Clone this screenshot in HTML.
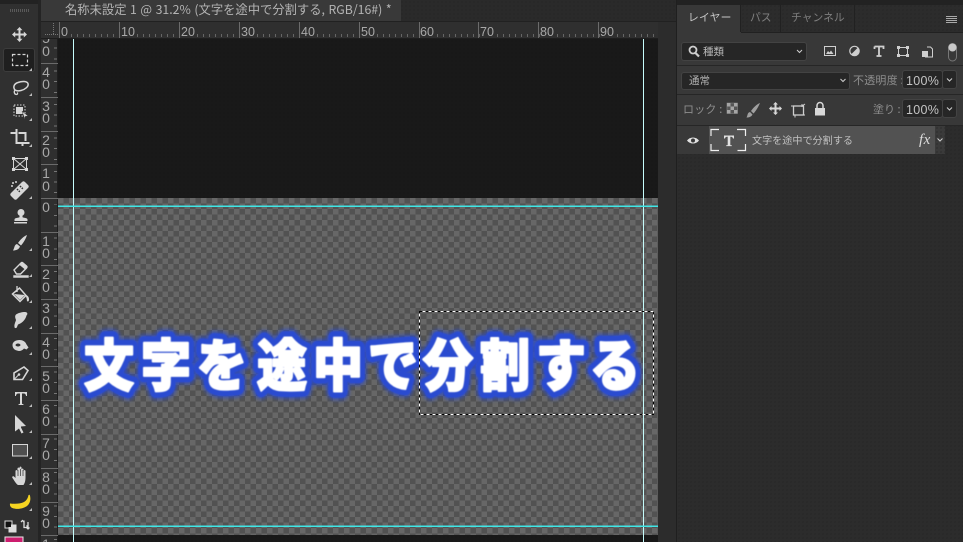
<!DOCTYPE html>
<html lang="ja"><head><meta charset="utf-8"><title>Photoshop</title>
<style>
html,body{margin:0;padding:0;background:#2c2c2c;width:963px;height:542px;overflow:hidden}
body{font-family:"Liberation Sans","Noto Sans CJK JP",sans-serif}
#root{position:absolute;left:0;top:0;width:963px;height:542px;overflow:hidden}
div,span{position:absolute;box-sizing:border-box;white-space:nowrap}
.dots{background-color:#2b2b2b;background-image:radial-gradient(#232323 .7px,transparent .8px);background-size:4px 4px}
.hr{color:#a8a8a8;font-size:12.5px;line-height:12px;top:26px}
.maj{background:#6b6b6b;width:1px;top:22px;height:16px}
.vm{background:#6b6b6b;left:41px;width:17px;height:1px}
.vl{color:#a8a8a8;font-size:14px;line-height:12px;left:41px;width:10px;text-align:center}
.jp{font-family:"Noto Sans CJK JP","Liberation Sans",sans-serif}
.box{background:#262626;border:1px solid #434343;border-radius:3px}
.lab{color:#8e8e8e;font-size:11px;line-height:14px}
.val{color:#c4c4c4;font-size:12.5px;line-height:18px;letter-spacing:.3px}
.ln{background:#262626;height:1px;left:677px;right:0}
</style></head><body><div id="root">

<!-- top strip -->
<div class="dots" style="left:0;top:0;width:963px;height:22px;background-color:#2a2a2a"></div>
<!-- tool panel -->
<div style="left:0;top:0;width:38px;height:542px;background:#303030"></div>
<div style="left:0;top:0;width:38px;height:4px;background:#222"></div>
<div style="left:38px;top:0;width:3px;height:542px;background:#242424"></div>
<div style="left:10px;top:9px;width:19px;height:3px;background:repeating-linear-gradient(90deg,#5a5a5a 0 1px,transparent 1px 2px)"></div>
<div style="left:3px;top:48px;width:32px;height:24px;background:#1f1f1f;border:1px solid #3c3c3c;border-radius:3px"></div>

<!-- tab -->
<div style="left:41px;top:0;width:360px;height:22px;background:#393939"></div>
<div style="left:41px;top:21px;width:636px;height:1px;background:#212121"></div>
<div class="jp" style="left:65px;top:-1px;color:#b4b4b4;font-size:12.3px;line-height:20px;word-spacing:.8px">名称未設定 1 @ 31.2% (文字を途中で分割する, RGB/16#) *</div>

<!-- vertical ruler -->
<div style="left:41px;top:39px;width:17px;height:503px;background:#2f2f2f;border-right:1px solid #1e1e1e"></div>
<div style="left:54px;top:31px;width:3px;height:511px;background:repeating-linear-gradient(180deg,transparent 0 6px,#777 6px 7px,transparent 7px 16.7px,#777 16.7px 17.7px,transparent 17.7px 27.400px,#777 27.400px 28.400px,transparent 28.400px 33.450px)"></div>
<div class="vm" style="top:63px"></div><div class="vm" style="top:97px"></div><div class="vm" style="top:131px"></div><div class="vm" style="top:164px"></div><div class="vm" style="top:198px"></div><div class="vm" style="top:232px"></div><div class="vm" style="top:265px"></div><div class="vm" style="top:299px"></div><div class="vm" style="top:333px"></div><div class="vm" style="top:366px"></div><div class="vm" style="top:400px"></div><div class="vm" style="top:434px"></div><div class="vm" style="top:468px"></div><div class="vm" style="top:502px"></div><div class="vm" style="top:535px"></div>
<span class="vl" style="top:32px">5</span><span class="vl" style="top:45px">0</span>
<span class="vl" style="top:66px">4</span><span class="vl" style="top:78px">0</span>
<span class="vl" style="top:100px">3</span><span class="vl" style="top:112px">0</span>
<span class="vl" style="top:134px">2</span><span class="vl" style="top:146px">0</span>
<span class="vl" style="top:167px">1</span><span class="vl" style="top:180px">0</span>
<span class="vl" style="top:201px">0</span>
<span class="vl" style="top:235px">1</span><span class="vl" style="top:247px">0</span>
<span class="vl" style="top:268px">2</span><span class="vl" style="top:281px">0</span>
<span class="vl" style="top:302px">3</span><span class="vl" style="top:315px">0</span>
<span class="vl" style="top:336px">4</span><span class="vl" style="top:348px">0</span>
<span class="vl" style="top:370px">5</span><span class="vl" style="top:382px">0</span>
<span class="vl" style="top:403px">6</span><span class="vl" style="top:415px">0</span>
<span class="vl" style="top:437px">7</span><span class="vl" style="top:449px">0</span>
<span class="vl" style="top:471px">8</span><span class="vl" style="top:483px">0</span>
<span class="vl" style="top:505px">9</span><span class="vl" style="top:517px">0</span>
<span class="vl" style="top:538px">1</span>

<!-- top ruler -->
<div style="left:41px;top:22px;width:617px;height:17px;background:#2f2f2f;border-bottom:1px solid #1e1e1e"></div>
<div style="left:59px;top:34px;width:599px;height:3px;background:repeating-linear-gradient(90deg,#666 0 1px,transparent 1px 6px)"></div>
<div style="left:45px;top:34px;width:14px;height:1px;background:repeating-linear-gradient(90deg,#777 0 1px,transparent 1px 2px)"></div>
<div style="left:53px;top:23px;width:1px;height:11px;background:repeating-linear-gradient(0deg,#777 0 1px,transparent 1px 2px)"></div>
<div class="maj" style="left:59px"></div><div class="maj" style="left:119px"></div><div class="maj" style="left:179px"></div><div class="maj" style="left:239px"></div><div class="maj" style="left:299px"></div><div class="maj" style="left:359px"></div><div class="maj" style="left:419px"></div><div class="maj" style="left:478px"></div><div class="maj" style="left:538px"></div><div class="maj" style="left:598px"></div><div class="maj" style="left:658px"></div>
<span class="hr" style="left:61px;background:#2f2f2f">0</span><span class="hr" style="left:121px;background:#2f2f2f">10</span><span class="hr" style="left:181px;background:#2f2f2f">20</span><span class="hr" style="left:241px;background:#2f2f2f">30</span><span class="hr" style="left:301px;background:#2f2f2f">40</span><span class="hr" style="left:361px;background:#2f2f2f">50</span><span class="hr" style="left:420px;background:#2f2f2f">60</span><span class="hr" style="left:480px;background:#2f2f2f">70</span><span class="hr" style="left:540px;background:#2f2f2f">80</span><span class="hr" style="left:600px;background:#2f2f2f">90</span>

<!-- canvas -->
<div style="left:58px;top:39px;width:600px;height:503px;background:#191919;background-image:radial-gradient(#141414 .7px,transparent .8px);background-size:4px 4px"></div>
<div style="left:58px;top:198px;width:600px;height:337px;background-color:#676767;background-image:conic-gradient(#525252 25%,#676767 0 50%,#525252 0 75%,#676767 0);background-size:11px 11px;background-position:0 0"></div>

<!-- right gutter -->
<div style="left:658px;top:22px;width:18px;height:520px;background:#2c2c2c"></div>
<div style="left:676px;top:0;width:1px;height:542px;background:#1f1f1f"></div>

<!-- panel -->
<div class="dots" style="left:677px;top:0;width:286px;height:542px;background-color:#2c2c2c"></div>
<div style="left:677px;top:0;width:286px;height:5px;background:#222"></div>
<div style="left:677px;top:32px;width:286px;height:93px;background:#383838"></div>
<div style="left:677px;top:5px;width:63px;height:28px;background:#383838"></div>
<div style="left:740px;top:5px;width:1px;height:27px;background:#212121"></div>
<div style="left:780px;top:5px;width:1px;height:27px;background:#212121"></div>
<div style="left:854px;top:5px;width:1px;height:27px;background:#212121"></div>
<div style="left:741px;top:32px;width:222px;height:1px;background:#212121"></div>
<div class="jp" style="left:688px;top:9px;color:#c6c6c6;font-size:10.8px;line-height:16px;letter-spacing:.2px">レイヤー</div>
<div class="jp" style="left:750px;top:9px;color:#7f7f7f;font-size:10.8px;line-height:16px">パス</div>
<div class="jp" style="left:791px;top:9px;color:#7f7f7f;font-size:10.8px;line-height:16px">チャンネル</div>
<div style="left:946px;top:16px;width:11px;height:7px;background:repeating-linear-gradient(180deg,#aaa 0 1px,transparent 1px 2px)"></div>

<div class="box" style="left:681px;top:42px;width:126px;height:19px"></div>
<div class="jp" style="left:703px;top:44px;color:#b8b8b8;font-size:10.5px;line-height:15px">種類</div>
<div class="ln" style="top:65px"></div>
<div class="box" style="left:681px;top:72px;width:169px;height:18px"></div>
<div class="jp" style="left:689px;top:73px;color:#b0b0b0;font-size:10.5px;line-height:15px">通常</div>
<div class="jp lab" style="left:853px;top:73px;letter-spacing:.2px">不透明度 :</div>
<div class="box" style="left:902px;top:70px;width:41px;height:19px"></div>
<div class="box" style="left:942px;top:70px;width:15px;height:19px"></div>
<div class="val" style="left:906px;top:72px">100%</div>
<div class="ln" style="top:94px"></div>
<div class="jp lab" style="left:683px;top:102px;letter-spacing:.2px">ロック :</div>
<div class="jp lab" style="left:873px;top:102px">塗り :</div>
<div class="box" style="left:902px;top:99px;width:41px;height:19px"></div>
<div class="box" style="left:942px;top:99px;width:15px;height:19px"></div>
<div class="val" style="left:906px;top:101px">100%</div>
<div class="ln" style="top:125px"></div>

<!-- layer row -->
<div style="left:677px;top:126px;width:268px;height:28px;background:#393939"></div>
<div style="left:709px;top:126px;width:226px;height:28px;background:#525252"></div>
<div class="dots" style="left:935px;top:126px;width:10px;height:28px;background-color:#3a3a3a"></div>
<div class="jp" style="left:752px;top:133px;color:#c0c0c0;font-size:10.1px;line-height:14px">文字を途中で分割する</div>
<div style="left:919px;top:132px;color:#dcdcdc;font:italic 400 15px/16px 'Liberation Serif',serif;letter-spacing:.5px">fx</div>

<!-- canvas text + icons overlay -->
<svg width="963" height="542" viewBox="0 0 963 542" style="position:absolute;left:0;top:0">
<defs><filter id="b" x="-5%" y="-20%" width="110%" height="140%"><feGaussianBlur stdDeviation="1.800"/></filter><filter id="s" x="-5%" y="-20%" width="110%" height="140%"><feGaussianBlur stdDeviation=".4"/></filter></defs>
<g font-family="'Noto Sans CJK JP','Liberation Sans',sans-serif" font-weight="900" font-size="50" transform="translate(0,386) scale(1,1.12)" stroke-linejoin="round">
<text filter="url(#b)" x="84 141 197 257 313 368 423 480 536 590" y="0" fill="#2a4bd0" stroke="#2a4bd0" stroke-width="15" opacity=".75">文字を途中で分割する</text>
<text filter="url(#s)" x="84 141 197 257 313 368 423 480 536 590" y="0" fill="#2a4bd0" stroke="#2a4bd0" stroke-width="11.500">文字を途中で分割する</text>
<text filter="url(#s)" x="84 141 197 257 313 368 423 480 536 590" y="0" fill="#fff" stroke="#fff" stroke-width="2">文字を途中で分割する</text>
</g>

<!-- guides -->
<rect x="73" y="39" width="1" height="503" fill="#c4fbfb"/><rect x="643" y="39" width="1" height="503" fill="#c4fbfb"/>
<rect x="58" y="205.500" width="600" height="1.500" fill="#3fe6e6"/><rect x="58" y="525.500" width="600" height="1.500" fill="#3fe6e6"/>

<!-- selection -->
<rect x="419.500" y="311.500" width="234" height="103" fill="none" stroke="#fff"/>
<rect x="419.500" y="311.500" width="234" height="103" fill="none" stroke="#000" stroke-dasharray="3 3"/>

<!-- tools -->
<g fill="#d6d6d6" stroke="none">
<path d="M19.500 27l3 3.200h-2v3.300h3.300v-2l3.200 3-3.200 3v-2h-3.300v3.300h2l-3 3.200-3-3.200h2v-3.300h-3.300v2l-3.200-3 3.200-3v2h3.300v-3.300h-2z"/>
<rect x="12.500" y="54.500" width="15" height="11" fill="none" stroke="#d6d6d6" stroke-width="1.200" stroke-dasharray="3 2"/>
<path d="M15 90c-2-2.500-1.500-6 3-7.500 4-1.500 9-1.500 10 1 1 3-3 6-7 7-2.500.6-4.500.6-6-.5z" fill="none" stroke="#d6d6d6" stroke-width="1.500"/><path d="M15 90c-1.500 2-.5 4.500 1.500 4.500 1 0 1.500-1 .8-2" fill="none" stroke="#d6d6d6" stroke-width="1.300"/>
<rect x="14" y="105" width="11" height="11" fill="none" stroke="#d6d6d6" stroke-dasharray="1.500 1.500"/><rect x="16" y="107" width="7" height="7"/><path d="M22 111l6 5-3 .6 0 3.400z" stroke="#303030" stroke-width=".5"/>
<path d="M10 132h5v-3h2v13h9v2h-11v-10h-5zM18 132h8v9h-2v-7h-6zM26 142h3v2h-3zM21 144h2v2h-2z" transform="translate(.5 0)"/>
<rect x="13.500" y="158.500" width="13" height="11" fill="none" stroke="#d6d6d6"/><path d="M13.500 158.500l13 11M26.500 158.500l-13 11" stroke="#d6d6d6" fill="none"/><rect x="12" y="157" width="3" height="3"/><rect x="25" y="157" width="3" height="3"/><rect x="12" y="168" width="3" height="3"/><rect x="25" y="168" width="3" height="3"/>
<path d="M11 193l11-11c1-1 2-1 3 0l3 3c1 1 1 2 0 3l-11 11c-1 1-2 1-3 0l-3-3c-1-1-1-2 0-3z"/><path d="M17 189l3 3M20 186l3 3" stroke="#303030" stroke-width="1.500" stroke-dasharray="1.500 1"/><circle cx="13" cy="183" r="1"/><circle cx="16" cy="182" r="1"/><circle cx="12" cy="186" r="1"/>
<circle cx="21" cy="212.500" r="3.500"/><path d="M19.500 215h3v2c0 1 5 .5 5 2.500v1.500h-13v-1.500c0-2 5-1.500 5-2.500zM14 222h13v1.500h-13z"/>
<path d="M27 235c-3 1-7 5-9 8l3 2.500c2-2 5-7 6-10.500zM17 244c-3 1-2 3-4 6.500 3 0 6-1 7-4z"/>
<path d="M14 270l7-7c.7-.7 1.500-.7 2 0l3.500 3c.6.6.6 1.300 0 2l-6 6h-4zM14 276h14v1H14z" fill="none" stroke="#d6d6d6" stroke-width="1.400"/><path d="M19 264.500l2-1.500c.7-.7 1.500-.7 2 0l3.500 3c.6.6.6 1.300 0 2l-1.500 1.500z"/>
<path d="M12.500 294l7-6 6.500 7.500-6 6z" fill="none" stroke="#d6d6d6" stroke-width="1.500"/><path d="M17 286v6" stroke="#d6d6d6" fill="none" stroke-width="1.300"/><path d="M14 294l11 1-5 5zM25.500 295c2 0 3.500 2 3.500 4 .2 1.500-.5 2.500-1.200 2.500-.8 0-1-1-1-2.500z"/>
<path d="M14.500 327c-.5-2.500 1-5 1.500-7-.7-2-1.500-4 0-5.500 2-1.500 6-2.500 9-2.500 2.500 0 3 2 1.500 3.500-.5 2-1.500 4-3.500 6-1.500 1.500-3.500 2.500-5 3l-1 2.500c-.5 1.500-2.500 1.500-2.500 0z"/>
<path d="M12.500 345c0-3 3-5 7-5 3 0 6 1.500 7 4.500l2 3-2 2-2.500-1c-2 2.500-5 3-7 2-3-.5-4.500-3-4.500-5.500z"/><ellipse cx="18" cy="345" rx="2.500" ry="1.500" fill="#303030"/>
<path d="M24 367l4 3.500-5.500 9h-8.500v-6.500z" fill="none" stroke="#d6d6d6" stroke-width="1.600"/><path d="M14.500 379l4-4" stroke="#d6d6d6" fill="none"/><circle cx="19" cy="374.500" r="1.300"/>
<path d="M15 392h12v4h-1c0-1.500-1-2.500-2.500-2.500h-1.500v10c0 .5 1 .7 1.500.7v.8h-5v-.8c.5 0 1.500-.2 1.500-.7v-10h-1.500c-1.500 0-2.500 1-2.500 2.500h-1z"/>
<path d="M15 415l11 11-5 .5 0 1 2.500 5-2 1-2.500-5-4 3z"/>
<rect x="12.500" y="444.500" width="15" height="11.500" fill="#4f4f4f" stroke="#d6d6d6"/>
<path d="M18 485c-2-1-4-5-5.500-7-.8-1 .2-2.200 1.500-1.500l1.500 1.500v-7c0-1.200 2-1.200 2 0v-2.500c0-1.200 2-1.200 2 0v-1c0-1.200 2-1.200 2 0v2c0-1.200 2-1.200 2 0v1.500c0-1.200 2-1.200 2 0v6.500c0 4-1 6-2 7.500z"/><path d="M18 470v6M20.500 469v7M23 470v6" stroke="#303030" stroke-width=".7"/>
<path d="M10 503.500c5 .5 10 .5 14-1.500 2.500-1.500 4-4 4.500-7l1.200-.3c1.500 4 .5 9-3 11.500-4.500 3-11 3.500-15 1.500-1.500-.8-2-2.500-1.700-4.200z" fill="#f6d421"/>
<rect x="5" y="521" width="7" height="7" fill="#111" stroke="#ddd"/><rect x="9" y="525" width="7" height="7" fill="#ddd" stroke="#ddd"/><rect x="8" y="524" width="3" height="3" fill="#111"/>
<path d="M24 520.500v7h4l-1.500-2M24 522l-1.500-1.500 -1.500 1.500M28 522v7M26.500 527.500l1.500 1.500 1.500-1.500" fill="none" stroke="#ddd" stroke-width="1.300"/>
</g>
<rect x="5" y="537" width="18" height="6" fill="#cc1d6e" stroke="#e8e8e8"/>
<!-- tool corner arrows -->
<g fill="#bcbcbc"><path d="M32 68v3h-3zM32 93v3h-3zM32 118v3h-3zM32 144v3h-3zM32 196v3h-3zM32 248v3h-3zM32 274v3h-3zM32 300v3h-3zM32 326v3h-3zM32 352v3h-3zM32 378v3h-3zM32 404v3h-3zM32 430v3h-3zM32 456v3h-3zM32 482v3h-3zM32 508v3h-3z"/></g>

<!-- panel icons -->
<g fill="none" stroke="#cfcfcf">
<circle cx="693" cy="50" r="3.500" stroke-width="1.800"/><path d="M695.500 53l3.500 3.500" stroke-width="2.200"/>
<path d="M797 50l2.500 2.500 2.500-2.500M840.500 79l2.500 2.500 2.500-2.500" stroke-width="1"/>
<path d="M947 78.500l2.500 2.500 2.500-2.500M947 107.500l2.500 2.500 2.500-2.500" stroke-width="1"/>
<path d="M937.500 138.500l2.500 2.500 2.500-2.500" stroke-width="1"/>
<rect x="824.500" y="46.500" width="11" height="9" stroke-width="1"/>
<path d="M826 54l2-3 1.500 1.500 1.500-2 2.500 3.500z" fill="#cfcfcf" stroke="none"/>
<circle cx="854.500" cy="51" r="4.700" stroke-width="1.200"/><path d="M851 54.500l7-7a5 5 0 0 1-7 7z" fill="#cfcfcf" stroke="none"/>
<path d="M874.500 46.500h9v2.500M879 47v9M876.500 56h5M874.500 49v-2.500" stroke-width="1.800"/>
<rect x="898.500" y="47.500" width="9" height="8" stroke-width="1"/>
<path d="M897 46h3v3h-3zM906 46h3v3h-3zM897 54h3v3h-3zM906 54h3v3h-3z" fill="#cfcfcf" stroke="none"/>
<path d="M927 47h3.500l2 2v8h-7v-4" stroke-width="1"/><rect x="922" y="51" width="6" height="6" fill="#cfcfcf" stroke="none"/>
<rect x="948.500" y="43.500" width="8" height="17.500" rx="4" stroke="#777"/>
<circle cx="952.500" cy="47.500" r="4" fill="#c9c9c9" stroke="none"/>
<path d="M727 103h10.500v10.500H727z" fill="#555" stroke="#888" stroke-width=".6"/>
<path d="M727 103h3.500v3.500H727zM734 103h3.500v3.500H734zM730.500 106.500H734v3.500h-3.500zM727 110h3.500v3.500H727zM734 110h3.500v3.500H734z" fill="#a5a5a5" stroke="none"/>
<path d="M760 103c-3 1-7 5-9 8l2.500 2.500c2.500-2.500 5-7 6.500-10.500zM750 112c-3 1-2 3-3.500 5.500 3 0 5-1 6-3z" fill="#9f9f9f" stroke="none"/>
<path d="M775.500 102l2.500 2.500h-1.500v3h3v-1.500l2.500 2.500-2.500 2.500v-1.500h-3v3h1.500l-2.500 2.500-2.500-2.500h1.500v-3h-3v1.500l-2.500-2.500 2.500-2.500v1.500h3v-3h-1.500z" fill="#d8d8d8" stroke="none"/>
<rect x="793.500" y="106" width="10" height="9" stroke-width="1.300"/><path d="M791 106h4M802 104v3M795 115v2.500M802 115h3M802 106l3-2" stroke-width="1"/>
<rect x="815" y="108" width="10" height="7.500" fill="#d8d8d8" stroke="none"/><path d="M817 108v-2.500a3 3 0 0 1 6 0v2.500" stroke="#d8d8d8" stroke-width="1.500"/>
<path d="M687 140.500c3-4 9-4 12 0-3 4-9 4-12 0z" fill="#e0e0e0" stroke="none"/><circle cx="693" cy="140.500" r="2" fill="#393939" stroke="none"/>
</g>
<path d="M711 136v-6.500h8M737 129.500h8.500v6.500M745.500 144v6.500h-8M719 150.500h-8v-6.500" fill="none" stroke="#f0f0f0" stroke-width="1.200"/>
<path d="M724 135.500h10v3h-1c0-1-1-1.800-2-1.800h-.7v8c0 .6.700.6 1.500.6v.8h-5.600v-.8c.8 0 1.500 0 1.500-.6v-8h-.7c-1 0-2 .8-2 1.800h-1z" fill="#e2e2e2"/>
</svg>
</div></body></html>
